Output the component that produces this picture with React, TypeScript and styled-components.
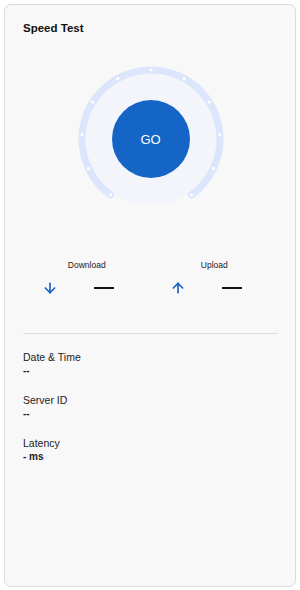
import { createGlobalStyle, styled } from 'styled-components';
import { ArrowDown, ArrowUp } from 'lucide-react';

const GlobalStyle = createGlobalStyle`
  html, body {
    margin: 0;
    padding: 0;
    background: #ffffff;
    font-family: 'Liberation Sans', Arial, sans-serif;
  }
`;

const CX = 75;
const CY = 75;
const R = 69;
const SWEEP = 144;

function polar(deg: number, r: number) {
  const rad = (deg * Math.PI) / 180;
  return { x: CX + r * Math.sin(rad), y: CY - r * Math.cos(rad) };
}

function Gauge() {
  const start = polar(-SWEEP, R);
  const end = polar(SWEEP, R);
  const dots = Array.from({ length: 11 }, (_, i) => -SWEEP + i * 28.8);
  return (
    <S.GaugeWrap>
      <svg width="150" height="150" viewBox="0 0 150 150">
        <circle cx={CX} cy={CY} r={66} fill="#f3f5fa" />
        <path
          d={`M ${start.x} ${start.y} A ${R} ${R} 0 1 1 ${end.x} ${end.y}`}
          fill="none"
          stroke="#dbe5fb"
          strokeWidth={7}
          strokeLinecap="round"
        />
        {dots.map(d => {
          const p = polar(d, R);
          return <circle key={d} cx={p.x} cy={p.y} r={1.6} fill="#ffffff" />;
        })}
      </svg>
      <S.GoButton>GO</S.GoButton>
    </S.GaugeWrap>
  );
}

interface MetricProps {
  label: string;
  up?: boolean;
}

function Metric({ label, up }: MetricProps) {
  return (
    <S.Metric>
      <S.MetricLabel>{label}</S.MetricLabel>
      <S.MetricRow>
        {up ? (
          <ArrowUp size={16} strokeWidth={2.5} color="#1b63c6" />
        ) : (
          <ArrowDown size={16} strokeWidth={2.5} color="#1b63c6" />
        )}
        <S.Dash />
      </S.MetricRow>
    </S.Metric>
  );
}

export default function App() {
  return (
    <>
      <GlobalStyle />
      <S.Card>
        <S.Title>Speed Test</S.Title>
        <Gauge />
        <S.Metrics>
          <Metric label="Download" />
          <Metric label="Upload" up />
        </S.Metrics>
        <S.Divider />
        <S.InfoList>
          <S.InfoItem>
            <S.InfoLabel>Date &amp; Time</S.InfoLabel>
            <S.InfoValue>--</S.InfoValue>
          </S.InfoItem>
          <S.InfoItem>
            <S.InfoLabel>Server ID</S.InfoLabel>
            <S.InfoValue>--</S.InfoValue>
          </S.InfoItem>
          <S.InfoItem>
            <S.InfoLabel>Latency</S.InfoLabel>
            <S.InfoValue>- ms</S.InfoValue>
          </S.InfoItem>
        </S.InfoList>
      </S.Card>
    </>
  );
}

const S = {
  Card: styled.div`
    box-sizing: border-box;
    margin: 4px;
    width: 292px;
    height: 583px;
    border: 1px solid #d9d9de;
    border-radius: 7px;
    background: #f8f8f8;
    padding: 16px 17px 0 18px;
    display: flex;
    flex-direction: column;
  `,
  Title: styled.div`
    font-size: 11.5px;
    font-weight: 700;
    color: #111;
    line-height: 14px;
  `,
  GaugeWrap: styled.div`
    position: relative;
    align-self: center;
    width: 150px;
    height: 150px;
    margin-top: 29px;
    svg {
      display: block;
    }
  `,
  GoButton: styled.button`
    position: absolute;
    left: 36px;
    top: 36px;
    width: 78px;
    height: 78px;
    border-radius: 50%;
    border: none;
    background: #1565c6;
    color: #fff;
    font-family: 'Liberation Sans', Arial, sans-serif;
    font-size: 13px;
    padding: 0;
    cursor: pointer;
  `,
  Metrics: styled.div`
    display: grid;
    grid-template-columns: 1fr 1fr;
    margin-top: 46px;
  `,
  Metric: styled.div`
    display: flex;
    flex-direction: column;
  `,
  MetricLabel: styled.div`
    text-align: center;
    font-size: 8.5px;
    color: #222;
    line-height: 11px;
  `,
  MetricRow: styled.div`
    display: flex;
    align-items: center;
    gap: 36px;
    padding-left: 19px;
    margin-top: 9px;
  `,
  Dash: styled.div`
    width: 20px;
    height: 2px;
    background: #111;
  `,
  Divider: styled.div`
    height: 1px;
    background: #e0e0e0;
    margin-top: 37px;
  `,
  InfoList: styled.div`
    display: flex;
    flex-direction: column;
    gap: 17px;
    margin-top: 17px;
  `,
  InfoItem: styled.div`
    display: flex;
    flex-direction: column;
    gap: 1px;
  `,
  InfoLabel: styled.div`
    font-size: 10.5px;
    color: #222;
    line-height: 13px;
  `,
  InfoValue: styled.div`
    font-size: 10px;
    font-weight: 700;
    color: #222;
    line-height: 12px;
  `,
};
